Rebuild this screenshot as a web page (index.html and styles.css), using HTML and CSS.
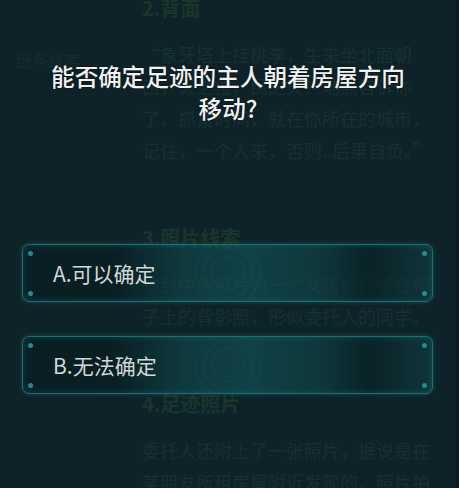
FILE: index.html
```html
<!DOCTYPE html>
<html lang="zh-CN">
	<head>
		<meta charset="utf-8">
		<meta name="viewport" content="width=device-width, initial-scale=1">
		<link rel="stylesheet" href="styles.css">
	</head>

	<body>
		<div class='screen'>
			<!-- the clue sheet lying under the question -->
			<div class='sheet'>
				<div class='side'>纸条线索</div>
				<div class='doc'>
					<div class='head'>2.背面</div>
					<div class='para'>
						<div>“象牙塔上挂桃李，生来坐北面朝</div>
						<div>西，天之位，民之天！地点告诉你</div>
						<div>了，抓紧时间，就在你所在的城市，</div>
						<div>记住，一个人来，否则..后果自负。”</div>
					</div>
					<div class='head'>3.照片线索</div>
					<div class='para'>
						<div>信封中的照片为一个女孩被捆绑在椅</div>
						<div>子上的背影照，形似委托人的同学。</div>
					</div>
					<div class='head'>4.足迹照片</div>
					<div class='para'>
						<div>委托人还附上了一张照片，据说是在</div>
						<div>某朋友所租房屋附近发现的，照片拍</div>
					</div>
				</div>
			</div>

			<div class='quiz'>
				<div class='question'>能否确定足迹的主人朝着房屋方向<br>移动?</div>
				<div class='options'>
					<div class='option'>
						<i class='dot tl'></i><i class='dot tr'></i><i class='dot bl'></i><i class='dot br'></i>
						<span>A.可以确定</span>
					</div>
					<div class='option'>
						<i class='dot tl'></i><i class='dot tr'></i><i class='dot bl'></i><i class='dot br'></i>
						<span>B.无法确定</span>
					</div>
				</div>
			</div>
		</div>
	</body>
</html>
```

FILE: styles.css
```css
html, body {
	margin: 0;
	background-color: #0e2329;
}

.screen {
	position: relative;
	width: 456px;
	height: 488px;
	overflow: hidden;
	border-right: 3px solid #0a1a1f;
	background-color: #0e2329;
	font-family: "Noto Sans CJK SC", "Noto Sans", sans-serif;
}

/* faded clue sheet */
.sheet {
	display: flex;
}

.side {
	width: 142px;
	box-sizing: border-box;
	padding: 48px 0 0 16px;
	font-size: 16px;
	color: #152d2d;
}

.doc {
	margin-top: -8px;
	white-space: nowrap;
}

.head {
	font-size: 20px;
	font-weight: bold;
	line-height: 32px;
	color: #1a352b;
	margin-bottom: 14px;
}

.para {
	font-size: 18px;
	line-height: 32px;
	color: #173030;
	margin-bottom: 56px;
}

/* question on top */
.quiz {
	position: absolute;
	top: 0;
	left: 0;
	right: 0;
	bottom: 0;
	padding-top: 60px;
}

.question {
	text-align: center;
	color: #f2f2f2;
	font-size: 23.6px;
	font-weight: 500;
	line-height: 32px;
	text-shadow: 0 0 2px rgba(0, 0, 0, 0.6);
}

.options {
	display: flex;
	flex-direction: column;
	gap: 34px;
	margin: 120px 23px 0 22px;
}

.option {
	position: relative;
	display: flex;
	align-items: center;
	height: 56px;
	padding-left: 30px;
	border: 1.5px solid #1d6f72;
	border-radius: 7px;
	box-shadow: 0 0 4px rgba(30, 130, 135, 0.45), inset 0 0 6px rgba(30, 130, 135, 0.4);
	background:
		radial-gradient(circle at 205px 50%, transparent 0, transparent 15px, rgba(40, 140, 140, 0.07) 16px, transparent 18px, transparent 23px, rgba(40, 140, 140, 0.07) 24px, transparent 26px, transparent 31px, rgba(40, 140, 140, 0.06) 32px, transparent 34px),
		linear-gradient(90deg, rgba(8, 30, 34, 0.85) 0, rgba(8, 30, 34, 0.8) 90px, rgba(14, 80, 82, 0.5) 160px, rgba(16, 90, 92, 0.55) 230px, rgba(14, 78, 80, 0.45) 300px, rgba(8, 34, 38, 0.7) 345px, rgba(14, 66, 70, 0.45) 395px, rgba(14, 70, 74, 0.45) 100%);
}

.option span {
	font-size: 21px;
	color: #d2d7d7;
}

.dot {
	position: absolute;
	width: 5px;
	height: 5px;
	border-radius: 50%;
	background-color: #1b9096;
}

.tl { top: 6px; left: 5px; }
.tr { top: 6px; right: 5px; }
.bl { bottom: 5px; left: 5px; }
.br { bottom: 5px; right: 5px; }
```
